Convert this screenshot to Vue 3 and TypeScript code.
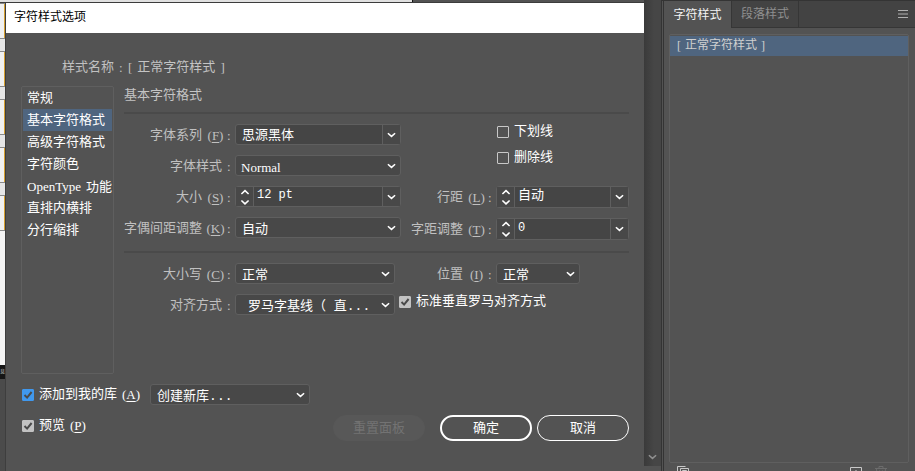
<script setup lang="ts">
import { ref } from 'vue'

interface Category {
  latin?: string
  text: string
}

const categories: Category[] = [
  { text: '常规' },
  { text: '基本字符格式' },
  { text: '高级字符格式' },
  { text: '字符颜色' },
  { latin: 'OpenType', text: '功能' },
  { text: '直排内横排' },
  { text: '分行缩排' },
]
const current = ref(1)

const fontFamily = ref('思源黑体')
const fontSize = ref('12 pt')
const leading = ref('自动')
const tracking = ref('0')
const underline = ref(false)
const strike = ref(false)
const romanAlign = ref(true)
const addToLibrary = ref(true)
const preview = ref(true)
</script>

<template>
  <div class="workspace">
    <div class="canvas-top"></div>

    <div class="canvas-side">
      <i class="card"></i>
      <i class="card"></i>
      <i class="card"></i>
      <i class="card"></i>
      <i class="card"></i>
      <i class="paper"></i>
      <span class="taskbar">息</span>
    </div>

    <section class="dialog" aria-labelledby="dialog-title">
      <header id="dialog-title" class="title">字符样式选项</header>
      <div class="body">
        <div class="name-row">
          <span class="cap">样式名称<span class="colon">:</span></span>
          <span class="name"><span class="latin">[</span>正常字符样式<span class="latin">]</span></span>
        </div>

        <div class="main">
          <nav class="cats">
            <button
              v-for="(c, i) in categories"
              :key="c.text"
              type="button"
              :class="{ on: i === current }"
              @click="current = i"
            ><span v-if="c.latin" class="latin word">{{ c.latin }}</span>{{ c.text }}</button>
          </nav>

          <div class="settings">
            <h2>基本字符格式</h2>
            <hr />
            <div class="group">
              <div class="pairs left">
                <label class="cap" for="family">字体系列<span class="key">(<u>F</u>)</span><span class="colon">:</span></label>
                <div class="combo">
                  <input id="family" v-model="fontFamily" type="text" />
                  <button type="button" class="drop" aria-label="字体系列">
                    <svg class="chev" viewBox="0 0 10 6"><path d="M1 1l4 3.6L9 1" /></svg>
                  </button>
                </div>

                <label class="cap plain" for="face">字体样式<span class="colon">:</span></label>
                <div class="pick">
                  <select id="face" class="serif-value"><option>Normal</option></select>
                  <svg class="chev" viewBox="0 0 10 6"><path d="M1 1l4 3.6L9 1" /></svg>
                </div>

                <label class="cap" for="size">大小<span class="key">(<u>S</u>)</span><span class="colon">:</span></label>
                <div class="combo">
                  <button type="button" class="spin" aria-label="大小">
                    <svg viewBox="0 0 10 16"><path d="M1.4 5L5 1.6 8.6 5M1.4 11.5L5 14.9l3.6-3.4" /></svg>
                  </button>
                  <input id="size" v-model="fontSize" class="raised number" type="text" />
                  <button type="button" class="drop" aria-label="大小">
                    <svg class="chev" viewBox="0 0 10 6"><path d="M1 1l4 3.6L9 1" /></svg>
                  </button>
                </div>

                <label class="cap" for="kern">字偶间距调整<span class="key">(<u>K</u>)</span><span class="colon">:</span></label>
                <div class="pick">
                  <select id="kern"><option>自动</option></select>
                  <svg class="chev" viewBox="0 0 10 6"><path d="M1 1l4 3.6L9 1" /></svg>
                </div>
              </div>

              <div class="right">
                <div class="checks">
                  <label class="check">
                    <span class="box">
                      <input v-model="underline" type="checkbox" />
                      <svg v-if="underline" viewBox="0 0 12 12"><path d="M2.5 6l2.6 2.6L9.6 3" /></svg>
                    </span>下划线
                  </label>
                  <label class="check">
                    <span class="box">
                      <input v-model="strike" type="checkbox" />
                      <svg v-if="strike" viewBox="0 0 12 12"><path d="M2.5 6l2.6 2.6L9.6 3" /></svg>
                    </span>删除线
                  </label>
                </div>
                <div class="pairs spins">
                  <label class="cap" for="leading">行距<span class="key">(<u>L</u>)</span><span class="colon">:</span></label>
                  <div class="combo">
                    <button type="button" class="spin" aria-label="行距">
                      <svg viewBox="0 0 10 16"><path d="M1.4 5L5 1.6 8.6 5M1.4 11.5L5 14.9l3.6-3.4" /></svg>
                    </button>
                    <input id="leading" v-model="leading" class="raised" type="text" />
                    <button type="button" class="drop" aria-label="行距">
                      <svg class="chev" viewBox="0 0 10 6"><path d="M1 1l4 3.6L9 1" /></svg>
                    </button>
                  </div>
                  <label class="cap" for="tracking">字距调整<span class="key">(<u>T</u>)</span><span class="colon">:</span></label>
                  <div class="combo">
                    <button type="button" class="spin" aria-label="字距调整">
                      <svg viewBox="0 0 10 16"><path d="M1.4 5L5 1.6 8.6 5M1.4 11.5L5 14.9l3.6-3.4" /></svg>
                    </button>
                    <input id="tracking" v-model="tracking" class="raised number" type="text" />
                    <button type="button" class="drop" aria-label="字距调整">
                      <svg class="chev" viewBox="0 0 10 6"><path d="M1 1l4 3.6L9 1" /></svg>
                    </button>
                  </div>
                </div>
              </div>
            </div>
            <hr />
            <div class="pairs lower">
              <label class="cap" for="case">大小写<span class="key">(<u>C</u>)</span><span class="colon">:</span></label>
              <div class="pick">
                <select id="case"><option>正常</option></select>
                <svg class="chev" viewBox="0 0 10 6"><path d="M1 1l4 3.6L9 1" /></svg>
              </div>
              <label class="cap" for="position">位置<span class="key">(<u>I</u>)</span><span class="colon">:</span></label>
              <div class="pick short">
                <select id="position"><option>正常</option></select>
                <svg class="chev" viewBox="0 0 10 6"><path d="M1 1l4 3.6L9 1" /></svg>
              </div>

              <label class="cap plain" for="align">对齐方式<span class="colon">:</span></label>
              <div class="pick">
                <select id="align" class="indent"><option>罗马字基线（ 直...</option></select>
                <svg class="chev" viewBox="0 0 10 6"><path d="M1 1l4 3.6L9 1" /></svg>
              </div>
              <label class="check wide">
                <span class="box">
                  <input v-model="romanAlign" type="checkbox" />
                  <svg v-if="romanAlign" viewBox="0 0 12 12"><path d="M2.5 6l2.6 2.6L9.6 3" /></svg>
                </span>标准垂直罗马对齐方式
              </label>
            </div>
          </div>
        </div>

        <footer class="foot">
          <div class="foot-row">
            <label class="check">
              <span class="box blue">
                <input v-model="addToLibrary" type="checkbox" />
                <svg v-if="addToLibrary" viewBox="0 0 12 12"><path d="M2.5 6l2.6 2.6L9.6 3" /></svg>
              </span>添加到我的库<span class="latin">(<u>A</u>)</span>
            </label>
            <div class="pick library">
              <select aria-label="添加到我的库"><option>创建新库...</option></select>
              <svg class="chev" viewBox="0 0 10 6"><path d="M1 1l4 3.6L9 1" /></svg>
            </div>
          </div>
          <div class="foot-row">
            <label class="check">
              <span class="box">
                <input v-model="preview" type="checkbox" />
                <svg v-if="preview" viewBox="0 0 12 12"><path d="M2.5 6l2.6 2.6L9.6 3" /></svg>
              </span>预览<span class="latin">(<u>P</u>)</span>
            </label>
            <div class="actions">
              <button type="button" class="pill reset" disabled>重置面板</button>
              <button type="button" class="pill ok">确定</button>
              <button type="button" class="pill">取消</button>
            </div>
          </div>
        </footer>
      </div>
    </section>

    <div class="gutter">
      <svg class="chev" viewBox="0 0 10 6"><path d="M1 1l4 3.6L9 1" /></svg>
    </div>

    <aside class="panel">
      <div class="tabs">
        <button type="button" class="tab active">字符样式</button>
        <button type="button" class="tab">段落样式</button>
        <button type="button" class="menu" aria-label="面板菜单">
          <svg viewBox="0 0 10 8"><path d="M0 .5h10M0 4h10M0 7.5h10" /></svg>
        </button>
      </div>
      <ul class="styles">
        <li><span class="latin">[</span>正常字符样式<span class="latin">]</span></li>
      </ul>
      <div class="tools">
        <button type="button" aria-label="字符样式库">
          <svg viewBox="0 0 12 12"><path d="M8.5.5h-8v8h2M11.5 2.5h-8v8h8zM5.5 4.5h4v4h-4z" /></svg>
        </button>
        <span class="grow"></span>
        <button type="button" aria-label="新建样式">
          <svg viewBox="0 0 12 12"><path d="M.5 1.5h11v10H.5zM6 4v5M3.5 6.5h5" /></svg>
        </button>
        <button type="button" class="dim" aria-label="删除样式" disabled>
          <svg viewBox="0 0 12 12"><path d="M0 2.5h12M4 2V.5h4V2M1.5 3l1 8.5h7l1-8.5M4.5 4.5v6M7.5 4.5v6" /></svg>
        </button>
      </div>
    </aside>
  </div>
</template>

<style>
body {
  background: #535353;
}
</style>

<style scoped>
.workspace {
  display: grid;
  grid-template-columns: 6px minmax(0, 1fr) 17px 254px;
  grid-template-rows: 3px minmax(0, 1fr);
  height: 100vh;
  overflow: hidden;
  background: #535353;
  color: #fff;
  font: 13px/20px "Liberation Mono", "Noto Sans CJK SC", sans-serif;
}
.workspace * {
  box-sizing: border-box;
}
button,
input,
select {
  margin: 0;
  padding: 0;
  border: 0;
  border-radius: 0;
  background: none;
  color: inherit;
  font: inherit;
  outline: none;
}
svg {
  display: block;
  fill: none;
  stroke: currentColor;
}
.latin,
.key,
.colon {
  font-family: "Liberation Serif", serif;
}
.word {
  margin-right: 5px;
}
.key {
  min-width: 19px;
  margin-left: 4px;
  text-align: center;
}
.colon {
  width: 7px;
  padding-left: 2px;
}
.plain .colon {
  width: 10px;
  padding-left: 5px;
}
u {
  text-underline-offset: 2px;
}

.canvas-top {
  grid-column: 1 / 3;
  background: linear-gradient(90deg, #e0e0e0 64%, #111 64%, #111 calc(64% + 1px), #535353 calc(64% + 1px));
  border-bottom: 1px solid #3c3c3c;
}
.canvas-side {
  grid-column: 1;
  grid-row: 2;
  display: flex;
  flex-direction: column;
  background: #e6e6e6;
  border-right: 1px solid #3e3e3e;
}
.card {
  flex: none;
  height: 36px;
  margin-bottom: 12px;
  background: #f1f1f1;
  border: solid #8a8a8a;
  border-width: 1px 0;
  box-shadow: inset -1px 0 #d6a030;
}
.card:nth-child(5) {
  margin-bottom: 0;
}
.paper {
  height: 134px;
  background: #f4f4f4;
}
.taskbar {
  height: 14px;
  background: #151515;
  color: #c8c8c8;
  font-family: "Noto Sans CJK SC", sans-serif;
  font-size: 5px;
  line-height: 12px;
}
.canvas-side::after {
  content: "";
  flex: 1;
  background: #4b4b4b;
}

.dialog {
  grid-row: 2;
  grid-column: 2;
  display: flex;
  flex-direction: column;
  background: #535353;
}
.title {
  flex: none;
  height: 30px;
  padding-left: 8px;
  background: #fff;
  color: #000;
  font-size: 12px;
  line-height: 31px;
}
.body {
  flex: 1;
  display: flex;
  flex-direction: column;
  padding: 24px 15px 0;
}
.name-row {
  display: flex;
  gap: 4px;
  height: 29px;
  padding-left: 41px;
  color: #c4c4c4;
  line-height: 22px;
}
.name {
  display: flex;
  gap: 5px;
}
.cap {
  display: flex;
  justify-content: flex-end;
  color: #c0c0c0;
  line-height: 23px;
  white-space: nowrap;
}
.name-row .cap {
  line-height: 22px;
}
.name-row .colon {
  width: 10px;
  padding-left: 5px;
}
.main {
  flex: 1;
  display: flex;
  gap: 10px;
}
.cats {
  flex: none;
  width: 93px;
  padding: 0 1px;
  border: 1px solid #5f5f5f;
  border-radius: 2px;
}
.cats button {
  display: block;
  width: 100%;
  height: 22px;
  padding: 2px 0 0 4px;
  text-align: left;
  white-space: nowrap;
}
.cats .on {
  background: #4f657f;
}
.settings {
  flex: 1;
  min-width: 0;
}
h2 {
  height: 26px;
  margin: 0;
  color: #c4c4c4;
  font: inherit;
  line-height: 20px;
}
hr {
  height: 2px;
  margin: 0;
  border: 0;
  background: #4a4a4a;
}
.group {
  display: flex;
  justify-content: space-between;
  padding: 10px 0 11px;
}
.pairs {
  display: grid;
  gap: 10px 3px;
}
.left {
  grid-template-columns: 108px 166px;
  grid-auto-rows: 21px;
}
.spins {
  grid-template-columns: 89px 133px;
  grid-auto-rows: 22px;
}
.lower {
  grid-template-columns: 108px 160px 1fr 133px;
  grid-auto-rows: 21px;
  padding-top: 10px;
}
.pick {
  display: grid;
  grid-template-columns: minmax(0, 1fr);
  align-items: center;
}
.pick > * {
  grid-area: 1 / 1;
}
.pick .chev {
  justify-self: end;
  margin-right: 5px;
  pointer-events: none;
}
select {
  appearance: none;
  width: 100%;
  height: 21px;
  padding: 2px 0 0 6px;
  border: 1px solid #5f5f5f;
  border-radius: 3px;
  background: #484848;
}
select.indent {
  padding-left: 12px;
}
.serif-value {
  padding-left: 5px;
  font-family: "Liberation Serif", serif;
}
.number {
  font-size: 12px;
}
.short {
  width: 84px;
}
.chev {
  width: 9px;
  height: 6px;
  stroke-width: 1.7;
}
.combo {
  display: flex;
  border: 1px solid #5f5f5f;
  border-radius: 3px;
  background: #454545;
}
.combo input {
  flex: 1;
  min-width: 0;
  padding: 2px 0 0 6px;
}
.combo .raised {
  padding: 0 0 3px 3px;
}
.drop,
.spin {
  display: grid;
  place-items: center;
  width: 18px;
  background: #484848;
}
.drop {
  padding-right: 1px;
  border-left: 1px solid #5f5f5f;
}
.spin {
  border-right: 1px solid #5f5f5f;
}
.spin svg {
  width: 10px;
  height: 16px;
  stroke-width: 1.6;
}
.checks {
  display: flex;
  flex-direction: column;
  gap: 6px;
  height: 62px;
  padding-left: 93px;
}
.checks .check {
  height: 20px;
}
.checks .check,
.wide {
  padding-bottom: 5px;
}
.check {
  display: flex;
  align-items: center;
  gap: 5px;
  white-space: nowrap;
}
.wide {
  grid-column: 3 / 5;
  padding-left: 1px;
}
.box {
  display: grid;
  flex: none;
}
.box > * {
  grid-area: 1 / 1;
  width: 12px;
  height: 12px;
}
.box svg {
  color: #4a4a4a;
  stroke-width: 2;
  pointer-events: none;
}
.box input {
  appearance: none;
  border: 1px solid #c8c8c8;
  border-radius: 1px;
}
.box input:checked {
  background: #c2c2c2;
  border-color: #c2c2c2;
}
.box.blue input:checked {
  background: #4098ee;
  border-color: #4098ee;
}

.foot {
  flex: none;
  display: flex;
  flex-direction: column;
  gap: 10px;
  height: 97px;
  padding: 10px 0 0 1px;
}
.foot-row {
  display: flex;
  gap: 10px;
  height: 21px;
}
.library {
  width: 160px;
}
.actions {
  display: flex;
  gap: 5px;
  height: 26px;
  margin-left: auto;
}
.pill {
  width: 92px;
  padding-top: 2px;
  border: 1px solid #fff;
  border-radius: 13px;
}
.ok {
  border-width: 2px;
}
.reset {
  margin-right: 10px;
  border-color: #585858;
  background: #585858;
  color: #737373;
}

.gutter {
  grid-row: 1 / 3;
  grid-column: 3;
  display: flex;
  align-items: flex-end;
  padding: 0 0 11px 4px;
  background: linear-gradient(0deg, #535353 5px, transparent 5px), linear-gradient(90deg, #3a3a3a, #464646 10px);
  color: #909090;
}
.panel {
  grid-row: 1 / 3;
  grid-column: 4;
  display: flex;
  flex-direction: column;
  border-left: 3px double #343434;
  border-top: 1px solid #343434;
  font-size: 12px;
}
.tabs {
  display: flex;
  flex: none;
  height: 27px;
  background: #434343;
}
.tab {
  width: 67px;
  padding-top: 2px;
  border: solid #363636;
  border-width: 0 1px 1px 0;
  color: #8f8f8f;
}
.tab.active {
  width: 68px;
  border-bottom: 0;
  background: #535353;
  color: #f4f4f4;
}
.menu {
  display: flex;
  flex: 1;
  align-items: center;
  justify-content: flex-end;
  padding-right: 7px;
  border-bottom: 1px solid #363636;
  color: #b0b0b0;
}
.menu svg {
  width: 10px;
  height: 8px;
}
.styles {
  flex: 1;
  margin: 6px 6px 0 5px;
  padding: 1px 0;
  border: 1px solid #5f5f5f;
  border-radius: 2px;
  list-style: none;
}
.styles li {
  display: flex;
  gap: 4px;
  height: 20px;
  padding-left: 7px;
  background: #4f657f;
  color: #d0d0d0;
}
.tools {
  flex: none;
  display: flex;
  gap: 13px;
  height: 8px;
  padding: 3px 28px 0 13px;
  overflow: hidden;
  color: #c8c8c8;
}
.tools svg {
  width: 12px;
  height: 12px;
}
.tools .dim {
  color: #6c6c6c;
}
.grow {
  flex: 1;
}
</style>
